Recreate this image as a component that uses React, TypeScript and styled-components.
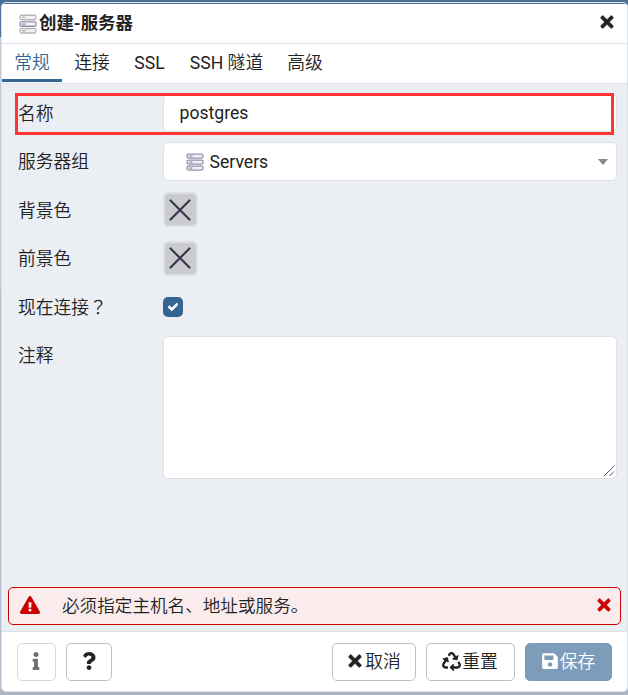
import React from 'react';
import styled, { createGlobalStyle } from 'styled-components';
import { FaTimes, FaInfo, FaQuestion, FaRecycle, FaSave, FaExclamationTriangle, FaCheck } from 'react-icons/fa';

const GlobalStyle = createGlobalStyle`
  * { box-sizing: border-box; }
  html, body { margin: 0; height: 695px; overflow: hidden; }
  body, button, input, textarea {
    font-family: Roboto, 'Noto Sans CJK SC', sans-serif;
    font-size: 17.6px;
    color: #222;
  }
  svg { display: block; flex: none; }
`;

const Backdrop = styled.div`
  width: 628px;
  height: 695px;
  padding: 2px 0 3px 1px;
  background: linear-gradient(#4a7098 0 37px, #c8ccda 37px 290px, #b4bccd 290px 690px, #adb5c2 690px);
`;

const Dialog = styled.section`
  height: 690px;
  display: flex;
  flex-direction: column;
  border: 1px solid #dde0e6;
  border-radius: 5px;
  overflow: hidden;
  background: #fff;
`;

const Header = styled.header`
  height: 41px;
  display: flex;
  align-items: center;
  padding: 0 11px 0 17px;
  border-top: 1px solid #4a7098;
  border-bottom: 1px solid #dde0e6;
`;

const Title = styled.h1`
  flex: 1;
  margin: 0 0 2px 2px;
  font-size: 17.4px;
  line-height: 24px;
  font-weight: 700;
`;

const IconButton = styled.button<{ $color?: string }>`
  display: flex;
  padding: 0;
  margin-bottom: 3px;
  border: 0;
  background: none;
  color: ${(p) => p.$color ?? '#222'};
`;

const BoldTimes = styled(FaTimes)`
  stroke: currentColor;
  stroke-width: 22px;
`;

const BoldCheck = styled(FaCheck)`
  stroke: currentColor;
  stroke-width: 45px;
`;

const Tabs = styled.nav`
  height: 40px;
  display: flex;
  border-bottom: 1px solid #dde0e6;
`;

const Tab = styled.button<{ $active?: boolean; $width: number }>`
  width: ${(p) => p.$width}px;
  height: 38px;
  padding: 3px 0 0;
  border: 0;
  border-bottom: 3px solid ${(p) => (p.$active ? '#326690' : 'transparent')};
  background: none;
  color: ${(p) => (p.$active ? '#326690' : '#222')};
  white-space: nowrap;
  line-height: 32px;
`;

const Han = styled.span`
  font-size: 17.8px;
  font-weight: 350;
`;

const Body = styled.main`
  position: relative;
  flex: 1;
  display: flex;
  flex-direction: column;
  padding: 9.8px 10px 6px 16px;
  background: #ebeef3;
`;

const Row = styled.div`
  display: grid;
  grid-template-columns: 145px 1fr;
  height: 48.5px;
  flex: none;
`;

const Label = styled.label`
  font-size: 17.8px;
  font-weight: 350;
  line-height: 39.4px;
`;

const WideMark = styled.span`
  font-family: 'Noto Sans CJK TC', sans-serif;
  line-height: 1;
`;

const TextInput = styled.input`
  width: 100%;
  height: 38.5px;
  padding: 0 15.5px;
  border: 1px solid #dde0e6;
  border-radius: 5px;
  outline: 0;
  background: #fff;
`;

const Select = styled.div`
  height: 38.5px;
  display: flex;
  align-items: center;
  padding: 0 8px 0 21.5px;
  border: 1px solid #dde0e6;
  border-radius: 5px;
  background: #fff;
`;

const SelectValue = styled.span`
  flex: 1;
  margin-left: 6px;
`;

const Caret = styled.span`
  border: 5px solid transparent;
  border-top: 6px solid #888;
  border-bottom: 0;
`;

const Swatch = styled.button`
  width: 35px;
  height: 35px;
  margin-top: 1.7px;
  display: flex;
  align-items: center;
  padding: 0 0 0 5px;
  border: 1px solid #dde0e6;
  border-radius: 6px;
  background: #c9cbcf;
  box-shadow: inset 0 0 0 1px #dfe1e5;
`;

const Checkbox = styled.span`
  width: 20px;
  height: 20px;
  margin-top: 9px;
  display: grid;
  place-items: center;
  border-radius: 5px;
  background: #326690;
  color: #fff;
`;

const NotesField = styled.div`
  position: relative;
  height: 143px;
`;

const Notes = styled.textarea`
  display: block;
  width: 100%;
  height: 100%;
  border: 1px solid #dde0e6;
  border-radius: 5px;
  background: #fff;
  resize: none;
`;

const Grip = styled.svg`
  position: absolute;
  right: 2px;
  bottom: 2px;
  pointer-events: none;
`;

const Highlight = styled.div`
  position: absolute;
  left: 13px;
  top: 9px;
  width: 599px;
  height: 42px;
  border: 3px solid #ff3535;
  pointer-events: none;
`;

const Alert = styled.div`
  height: 38px;
  margin: auto -4px 0 -10px;
  display: flex;
  align-items: center;
  padding: 0 7px 0 11px;
  border: 1px solid #c00;
  border-radius: 5px;
  background: #faecec;
  color: #c00;

  & > svg { margin-bottom: 2px; }
`;

const AlertText = styled.span`
  flex: 1;
  margin: 0 0 3px 22px;
  color: #222;
  font-weight: 350;
`;

const Footer = styled.footer`
  height: 60px;
  display: flex;
  align-items: center;
  gap: 10px;
  padding: 1px 15px 0;
  border-top: 1px solid #dde0e6;
`;

const Button = styled.button<{ $width: number; $kind?: 'primary' | 'muted' }>`
  width: ${(p) => p.$width}px;
  height: 38px;
  display: flex;
  align-items: center;
  justify-content: center;
  padding: 0 1px 2px 0;
  gap: 1px;
  border: 1px solid ${(p) => (p.$kind === 'primary' ? '#7c9cb9' : p.$kind === 'muted' ? '#d4d8e1' : '#bac1cd')};
  border-radius: 5px;
  background: ${(p) => (p.$kind === 'primary' ? '#7c9cb9' : '#fff')};
  color: ${(p) => (p.$kind === 'primary' ? '#fff' : p.$kind === 'muted' ? '#707070' : '#222')};
  white-space: nowrap;

  ${Han} { margin-bottom: 2px; }
`;

const Spacer = styled.span`
  flex: 1;
  margin: 0 -10px;
`;

const unitY = [1.1, 7.1, 13.1];

function ServerIcon({ faded = false }: { faded?: boolean }) {
  return (
    <svg width="18" height={faded ? 20 : 18} viewBox="0 0 18 18" preserveAspectRatio="none">
      {unitY.map((y, i) => {
        const stroke = faded && i !== 1 ? '#b5b5b9' : '#9291ad';
        return (
          <g key={y} stroke={stroke} fill="#f2f2f5">
            <rect x="1" y={y} width="16" height="4" rx="1.5" strokeWidth="1.3" />
            <path d={`M3 ${y + 2}h3.5`} strokeWidth="1.2" />
          </g>
        );
      })}
    </svg>
  );
}

function CrossIcon() {
  return (
    <svg width="22" height="22" viewBox="0 0 22 22">
      <path d="M1.5 1.5l19 19M20.5 1.5l-19 19" stroke="#38384b" strokeWidth="2.2" strokeLinecap="round" />
    </svg>
  );
}

export default function App() {
  return (
    <>
      <GlobalStyle />
      <Backdrop>
        <Dialog>
          <Header>
            <ServerIcon faded />
            <Title>创建-服务器</Title>
            <IconButton aria-label="关闭"><BoldTimes size={18} /></IconButton>
          </Header>
          <Tabs>
            <Tab $active $width={60}><Han>常规</Han></Tab>
            <Tab $width={60}><Han>连接</Han></Tab>
            <Tab $width={55}>SSL</Tab>
            <Tab $width={99}>SSH <Han>隧道</Han></Tab>
            <Tab $width={58}><Han>高级</Han></Tab>
          </Tabs>
          <Body>
            <Row>
              <Label htmlFor="name">名称</Label>
              <TextInput id="name" defaultValue="postgres" />
            </Row>
            <Row>
              <Label>服务器组</Label>
              <Select>
                <ServerIcon />
                <SelectValue>Servers</SelectValue>
                <Caret />
              </Select>
            </Row>
            <Row>
              <Label>背景色</Label>
              <Swatch aria-label="背景色"><CrossIcon /></Swatch>
            </Row>
            <Row>
              <Label>前景色</Label>
              <Swatch aria-label="前景色"><CrossIcon /></Swatch>
            </Row>
            <Row>
              <Label>现在连接<WideMark lang="zh-TW">？</WideMark></Label>
              <Checkbox><BoldCheck size={10} /></Checkbox>
            </Row>
            <Row>
              <Label htmlFor="notes">注释</Label>
              <NotesField>
                <Notes id="notes" />
                <Grip width="12" height="12" viewBox="0 0 12 12">
                  <path d="M1 11L11 1M6.5 11L11 6.5" stroke="#555" />
                </Grip>
              </NotesField>
            </Row>
            <Highlight />
            <Alert>
              <FaExclamationTriangle size={20} />
              <AlertText>必须指定主机名、地址或服务。</AlertText>
              <IconButton aria-label="关闭提示" $color="#c00"><BoldTimes size={18} /></IconButton>
            </Alert>
          </Body>
          <Footer>
            <Button $width={39} $kind="muted" aria-label="信息"><FaInfo size={18} /></Button>
            <Button $width={46} aria-label="帮助"><FaQuestion size={18} /></Button>
            <Spacer />
            <Button $width={84}><BoldTimes size={18} /><Han>取消</Han></Button>
            <Button $width={89}><FaRecycle size={19} /><Han>重置</Han></Button>
            <Button $width={87} $kind="primary"><FaSave size={18} /><Han>保存</Han></Button>
          </Footer>
        </Dialog>
      </Backdrop>
    </>
  );
}
